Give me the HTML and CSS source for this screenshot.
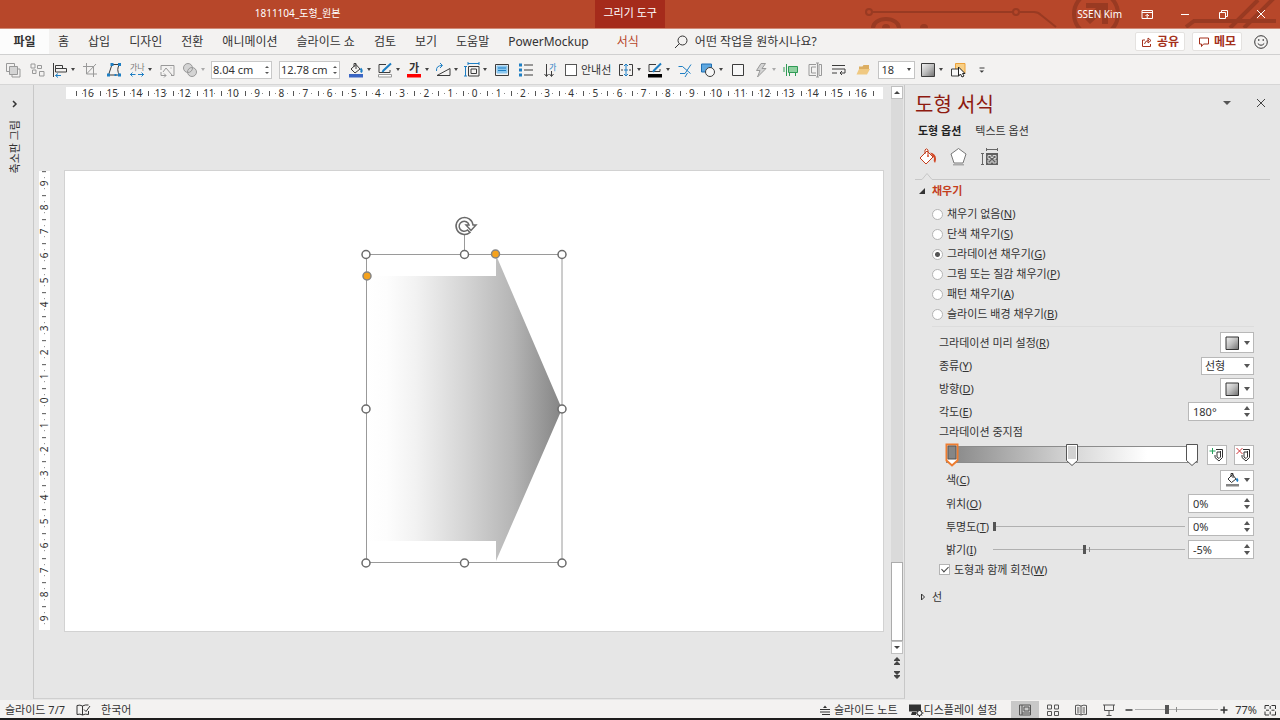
FILE: index.html
```html
<!DOCTYPE html>
<html lang="ko">
<head>
<meta charset="utf-8">
<meta name="viewport" content="width=device-width, initial-scale=1">
<title>1811104_도형_원본</title>
<link rel="stylesheet" href="styles.css">
</head>
<body>
<div class="app">

<header class="titlebar">
  <svg class="circuit" viewBox="0 0 430 28" aria-hidden="true">
    <circle cx="19" cy="12" r="3"/><path d="M22 12H163M170 12H184Q188 12 191 15L206 27"/><circle cx="166" cy="12" r="3"/>
    <path class="wide" d="M23 28A13 9 0 0 1 49 28"/><circle class="solid" cx="36" cy="28" r="4"/><circle class="solid" cx="74" cy="28" r="4"/>
    <circle class="wide" cx="246" cy="14" r="22"/><path class="solid" d="M236 3h22v21h-6v-11l-12 11-5-5 11-11h-10z"/>
    <path class="wide" d="M336 27l8-6h82M380 28l28-28M394 28l30-30"/>
  </svg>
  <div class="doc-title">1811104_도형_원본</div>
  <div class="context-title">그리기 도구</div>
  <div class="window-tools">
    <span class="user">SSEN Kim</span>
    <button class="win" aria-label="리본 표시 옵션"><svg class="ic" viewBox="0 0 16 16"><path d="M3 4.500h10.500v8H3zM3 6.500h10.500M8.200 12V8.500M6.500 10l1.700-1.700L10 10"/></svg></button>
    <button class="win" aria-label="최소화"><svg class="ic" viewBox="0 0 16 16"><path d="M4 8.500h8"/></svg></button>
    <button class="win" aria-label="이전 크기로 복원"><svg class="ic" viewBox="0 0 16 16"><path d="M4.500 6.500h6v6h-6zM6.500 6V4.500h6v6H11"/></svg></button>
    <button class="win" aria-label="닫기"><svg class="ic" viewBox="0 0 16 16"><path d="M4 4l8 8M12 4l-8 8"/></svg></button>
  </div>
</header>

<nav class="tabs">
  <button class="tab file">파일</button>
  <button class="tab">홈</button>
  <button class="tab">삽입</button>
  <button class="tab">디자인</button>
  <button class="tab">전환</button>
  <button class="tab">애니메이션</button>
  <button class="tab">슬라이드 쇼</button>
  <button class="tab">검토</button>
  <button class="tab">보기</button>
  <button class="tab">도움말</button>
  <button class="tab">PowerMockup</button>
  <button class="tab context">서식</button>
  <button class="tab tell"><svg class="ic" viewBox="0 0 16 16"><circle cx="9.500" cy="6.500" r="4.500"/><path d="M6.300 9.700L2 14"/></svg>어떤 작업을 원하시나요?</button>
  <div class="tab-actions">
    <button class="pill"><svg class="ic small" viewBox="0 0 12 12"><path d="M4 4H1.500v6.500h8V8M3.500 8Q4 4.500 8 4.500M7 2l3 2.500L7 7z"/></svg>공유</button>
    <button class="pill"><svg class="ic small" viewBox="0 0 12 12"><path d="M1.500 2h9v6H5.500L3.500 10.500V8h-2z"/></svg>메모</button>
    <button class="smile" aria-label="사용자 의견"><svg class="ic" viewBox="0 0 16 16"><circle cx="8" cy="8" r="6.300"/><path d="M4.800 9.500Q8 13 11.200 9.500M5.800 5v2M10.200 5v2"/></svg></button>
  </div>
</nav>

<div class="toolbar" role="toolbar" aria-label="빠른 실행 도구 모음">
  <button class="tb dim" aria-label="그룹"><svg class="ic" viewBox="0 0 16 16"><path d="M4 9.500H1.500v-8h8V4M12.500 7H15v8H7v-2.500"/><path class="fill-grey" d="M4.500 4.500h8v8h-8z"/></svg></button>
  <button class="tb dim" aria-label="그룹 해제"><svg class="ic" viewBox="0 0 16 16"><path d="M2 2h4v4H2zM8.500 3.500h4v3h-4zM3.500 8h3.500v3.500H3.500zM10.500 9.500h4.500v4.500h-4.500z"/></svg></button>
  <button class="tb dd" aria-label="맞춤"><svg class="ic" viewBox="0 0 16 16"><path d="M1.500 1v14M3.500 3.500h7v3h-7zM3.500 6.500h11v3.500h-11z"/><path class="blue" d="M9 13.500H3.500M6 11.500l-2.500 2 2.500 2"/></svg><i class="caret"></i></button>
  <button class="tb dim" aria-label="자르기"><svg class="ic" viewBox="0 0 16 16"><path d="M4.500 1v11H15M1 4.500h10.500V15M4.500 12L14 2"/></svg></button>
  <button class="tb" aria-label="점 편집"><svg class="ic" viewBox="0 0 16 16"><path d="M6 2.500h7.500q-3.500 5 0 10.500H2.500L6 2.500"/><path class="fill-blue" d="M4.500 1h3v3h-3zM12 1h3v3h-3zM1 11.500h3v3H1zM12 11.500h3v3h-3zM8.500 12h2v2h-2z"/></svg></button>
  <button class="tb dd" aria-label="문자 간격"><svg class="ic" viewBox="0 0 16 16"><text class="glyph dimtext" x="1" y="8" font-size="8">가나</text><path class="blue" d="M1 12.500h5.500M3.500 10.500l-2 2 2 2M9 12.500h6M12.500 10.500l2 2-2 2"/></svg><i class="caret"></i></button>
  <button class="tb dim" aria-label="그림 바꾸기"><svg class="ic" viewBox="0 0 16 16"><path d="M2 8V3.500h13v10h-3M4 10l3-4 6 7M11.500 6h1M2 10v3.500h5l-2-2M7 13.500l-2 2"/></svg></button>
  <button class="tb dd dim" aria-label="도형 병합"><svg class="ic" viewBox="0 0 16 16"><circle class="fill-grey" cx="6" cy="6" r="4.500"/><circle class="fill-grey" cx="10" cy="10" r="4.500"/><path d="M6 10.500A4.500 4.500 0 0 0 10.500 6"/></svg><i class="caret"></i></button>

  <div class="spin tool-spin first"><input type="text" value="8.04 cm" aria-label="도형 높이"><span class="arrows"><button aria-label="늘리기"></button><button aria-label="줄이기"></button></span></div>
  <div class="spin tool-spin"><input type="text" value="12.78 cm" aria-label="도형 너비"><span class="arrows"><button aria-label="늘리기"></button><button aria-label="줄이기"></button></span></div>

  <button class="tb dd lead" aria-label="도형 채우기"><svg class="ic" viewBox="0 0 16 16"><path d="M3 7l5-4.500 4 4.500-5 4zM6 5V1.500h2V7"/><path class="blue thick" d="M12.500 6.500q2 2 .5 4"/><path class="fill-royal" d="M1 12h14v3.500H1z"/></svg><i class="caret"></i></button>
  <button class="tb dd" aria-label="도형 윤곽선"><svg class="ic" viewBox="0 0 16 16"><path d="M9 2.500H2v8h11V8"/><path class="blue thick" d="M14 1.500L6.500 8.500 5.500 10"/><path class="fill-white" d="M1.500 12.500h13v2.500h-13z"/></svg><i class="caret"></i></button>
  <button class="tb dd" aria-label="글꼴 색"><svg class="ic" viewBox="0 0 16 16"><text class="glyph bold" x="3" y="10" font-size="11">가</text><path class="fill-red" d="M1 12h14v3.500H1z"/></svg><i class="caret"></i></button>
  <button class="tb dd" aria-label="회전"><svg class="ic" viewBox="0 0 16 16"><path d="M2 13.500h13V6.500z"/><path class="blue" d="M1.500 9Q1 3.500 7 3.500M5 1l2.500 2.500L5 6"/></svg><i class="caret"></i></button>
  <button class="tb dd" aria-label="크기"><svg class="ic" viewBox="0 0 16 16"><path d="M4.500 4.500H15v9.500H4.500zM7 7h5.500v4.500H7z"/><path class="blue" d="M4 1.500h11M4 0v3M15 0v3M1.500 4.500V14M0 4.500h3M0 14h3"/></svg><i class="caret"></i></button>
  <button class="tb" aria-label="텍스트 맞춤"><svg class="ic" viewBox="0 0 16 16"><path d="M1.500 2.500h13v11h-13z"/><path class="sky" d="M3 4h10v7H3z"/><path class="blue" d="M4 6h8M4 8.500h8"/></svg></button>
  <button class="tb" aria-label="글머리 기호"><svg class="ic" viewBox="0 0 16 16"><path d="M6 3h9M6 8h9M6 13h9"/><path class="fill-blue" d="M1 1.500h3v3H1zM1 6.500h3v3H1zM1 11.500h3v3H1z"/></svg></button>
  <button class="tb" aria-label="텍스트 방향"><svg class="ic" viewBox="0 0 16 16"><path d="M4.500 2v12M2.500 12l2 2.500 2-2.500M9.500 9v5M7.500 12l2 2.500 2-2.500"/><text class="glyph bluetext" x="7" y="8" font-size="8">가</text></svg></button>
  <label class="guide"><input type="checkbox">안내선</label>
  <button class="tb dd" aria-label="텍스트 줄 맞춤"><svg class="ic" viewBox="0 0 16 16"><path d="M5 2.500H1.500v11H5M11 2.500h3.500v11H11M3 8h2M11 8h2"/><path class="blue" d="M8 2v12M6 4l2-2 2 2M6 12l2 2 2-2M6 8h4"/></svg><i class="caret"></i></button>
  <button class="tb dd" aria-label="윤곽선 색"><svg class="ic" viewBox="0 0 16 16"><path d="M9 2.500H2v7h11V7"/><path class="blue thick" d="M14 1.500L7 8.500 6 10"/><path class="fill-black" d="M1 12h14v3.500H1z"/></svg><i class="caret"></i></button>
  <button class="tb" aria-label="연결선"><svg class="ic" viewBox="0 0 16 16"><path class="blue" d="M1.500 4.500h4l8 7M3 11.500h5l6-9M8 15l2.500-4"/></svg></button>
  <button class="tb dd" aria-label="도형"><svg class="ic" viewBox="0 0 16 16"><path class="skyblue" d="M1.500 2h10v8h-10z"/><circle class="fill-paper" cx="10" cy="10" r="4.500"/></svg><i class="caret"></i></button>
  <button class="tb" aria-label="사각형"><svg class="ic" viewBox="0 0 16 16"><path class="fill-paper" d="M2.500 2.500h11v11h-11z"/></svg></button>
  <button class="tb dd dim" aria-label="효과"><svg class="ic" viewBox="0 0 16 16"><path class="fill-grey" d="M8 1.500L3.500 8.500H7L4.500 15 13 6.500H9L12.500 1.500z"/></svg><i class="caret"></i></button>
  <button class="tb" aria-label="개체 맞춤"><svg class="ic" viewBox="0 0 16 16"><path class="green" d="M5.500 4.500h9v6h-9z"/><path class="green" d="M3.500 2v12M1 5v5M6.500 10v4M12.500 10v4"/></svg></button>
  <button class="tb dim" aria-label="대칭"><svg class="ic" viewBox="0 0 16 16"><path d="M9 2.500H2v11h7M4.500 5H9M4.500 5v6H9M12 2.500h2.500v11H12zM10.500 1v14M9 1h3M9 15h3"/></svg></button>
  <button class="tb" aria-label="줄 바꿈"><svg class="ic" viewBox="0 0 16 16"><path d="M1 3.500h13M1 7h13v4H9M1 11h5M11 9l-2 2 2 2"/></svg></button>
  <button class="tb" aria-label="열기"><svg class="ic" viewBox="0 0 16 16"><path class="folder-back" d="M4 9V4.500h3.500L8.500 3H14v6z"/><path class="folder" d="M4 7h11l-3 5.500H1.500z"/></svg></button>
  <div class="size-box"><input type="text" value="18" aria-label="글꼴 크기"><i class="caret"></i></div>
  <button class="tb dd" aria-label="그라데이션"><svg class="ic" viewBox="0 0 16 16"><path fill="url(#swatch)" d="M1.500 1.500h13v13h-13z"/></svg><i class="caret"></i></button>
  <button class="tb" aria-label="선택"><svg class="ic" viewBox="0 0 16 16"><path class="orange" d="M5.500 1.500H15V11H5.500z"/><path class="fill-paper" d="M1.500 7h7.500v7H1.500z"/><path class="cursor" d="M8.500 5v9l2-2 1.500 3 2-1-1.500-2.500H15z"/></svg></button>
  <button class="tb" aria-label="도구 모음 사용자 지정"><svg class="ic" viewBox="0 0 16 16"><path d="M5.500 6h5"/><path class="ink" d="M5.500 8.500h4.600L7.800 10.800z"/></svg></button>
</div>

<main class="workspace">
  <aside class="thumbs">
    <svg class="ic small" viewBox="0 0 12 12"><path class="medium" d="M4 3L7 6 4 9"/></svg>
    <span class="sideways">축소판 그림</span>
  </aside>

  <section class="editor">
    <div class="hruler"><span>16</span><span>15</span><span>14</span><span>13</span><span>12</span><span>11</span><span>10</span><span>9</span><span>8</span><span>7</span><span>6</span><span>5</span><span>4</span><span>3</span><span>2</span><span>1</span><span>0</span><span>1</span><span>2</span><span>3</span><span>4</span><span>5</span><span>6</span><span>7</span><span>8</span><span>9</span><span>10</span><span>11</span><span>12</span><span>13</span><span>14</span><span>15</span><span>16</span></div>
    <div class="stage">
      <div class="vruler"><span>9</span><span>8</span><span>7</span><span>6</span><span>5</span><span>4</span><span>3</span><span>2</span><span>1</span><span>0</span><span>1</span><span>2</span><span>3</span><span>4</span><span>5</span><span>6</span><span>7</span><span>8</span><span>9</span></div>
      <div class="slide">
        <svg viewBox="0 0 818 460" role="img" aria-label="화살표 도형">
          <defs>
            <linearGradient id="arrowFill" gradientUnits="userSpaceOnUse" x1="302" x2="497" y1="0" y2="0"><stop offset="0" stop-color="#fff"/><stop offset=".1" stop-color="#fdfdfd"/><stop offset=".25" stop-color="#f2f2f2"/><stop offset=".5" stop-color="#d5d5d5"/><stop offset=".75" stop-color="#b5b5b5"/><stop offset="1" stop-color="#848484"/></linearGradient>
            <linearGradient id="swatch" x1="0" y1="0" x2="1" y2="1"><stop offset="0" stop-color="#f4f4f4"/><stop offset=".5" stop-color="#bdbdbd"/><stop offset="1" stop-color="#6e6e6e"/></linearGradient>
          </defs>
          <path fill="url(#arrowFill)" d="M302 105H431V84L497 238 431 390V370H302z"/>
          <path class="frame" d="M301.500 83.500H497v308H301.500zM399.500 63v20"/>
          <g class="handle"><circle cx="301" cy="83.500" r="4"/><circle cx="399.500" cy="83.500" r="4"/><circle cx="497" cy="83.500" r="4"/><circle cx="301" cy="238" r="4"/><circle cx="497" cy="238" r="4"/><circle cx="301" cy="392" r="4"/><circle cx="399.500" cy="392" r="4"/><circle cx="497" cy="392" r="4"/></g>
          <g class="adjust"><circle cx="430.500" cy="83" r="4"/><circle cx="302" cy="105" r="4"/></g>
          <path class="rotate" d="M408 54A8.500 8.500 0 1 0 405 61.500L402.500 59A5 5 0 1 1 404 54H401L406 59.500 411 54z"/>
        </svg>
      </div>
    </div>
  </section>

  <div class="scroll">
    <button class="up" aria-label="위로"></button>
    <div class="track"><div class="thumb"></div></div>
    <button class="down" aria-label="아래로"></button>
    <button class="page" aria-label="이전 슬라이드"><svg class="ic small" viewBox="0 0 12 12"><path class="ink" d="M6 2l3 3H3zM6 6l3 3H3z"/><path d="M3 5.500h6M3 9.500h6"/></svg></button>
    <button class="page" aria-label="다음 슬라이드"><svg class="ic small" viewBox="0 0 12 12"><path class="ink" d="M6 6l3-3H3zM6 10l3-3H3z"/><path d="M3 2.500h6M3 6.500h6"/></svg></button>
  </div>

  <aside class="panel">
    <div class="panel-head"><h1>도형 서식</h1><button class="ghost" aria-label="작업창 옵션"><i class="caret big"></i></button><button class="ghost" aria-label="닫기"><svg class="ic small" viewBox="0 0 12 12"><path d="M2 2l8 8M10 2l-8 8"/></svg></button></div>
    <div class="panel-tabs"><button class="on">도형 옵션</button><button>텍스트 옵션</button></div>
    <div class="panel-icons">
      <button aria-label="채우기 및 선"><svg viewBox="0 0 20 20"><path class="pour" d="M2 11l7-7 6 6-7 7zM7 7V3q1-2.500 3 0v5"/><circle class="pour-dot" cx="10" cy="9" r="1"/><path class="pour-fill" d="M12 5.500q6 1 6 6.500 0 2-1 4-2-2-1-5z"/></svg></button>
      <button aria-label="효과"><svg viewBox="0 0 20 20"><path class="penta-shadow" d="M4 17h11v1.500H4z"/><path class="penta" d="M9.500 1.500l7.500 5.500-3 9h-9l-3-9z"/></svg></button>
      <button aria-label="크기 및 속성"><svg viewBox="0 0 20 20"><path class="metric" d="M6 2.500h12M6.500 1v3M17.500 1v3M2.500 6v12M1 6.500h3M1 17.500h3"/><path class="metric-fill" d="M6 6h12v12H6z"/><path class="metric-cross" d="M8 8.500h3v2h2v-2h3v3h-2v1.500h2v3h-3v-2h-2v2H8v-3h2v-1.500H8z"/></svg></button>
    </div>
    <svg class="notch" viewBox="0 0 20 8" aria-hidden="true"><path d="M0 7.500h7l5-6 5 6h3"/></svg>

    <h2 class="section open"><svg class="ic small" viewBox="0 0 12 12"><path class="ink" d="M9 3v6H3z"/></svg>채우기</h2>
    <fieldset class="radios" aria-label="채우기">
      <label><input type="radio" name="fill"><span>채우기 없음(<u>N</u>)</span></label>
      <label><input type="radio" name="fill"><span>단색 채우기(<u>S</u>)</span></label>
      <label><input type="radio" name="fill" checked><span>그라데이션 채우기(<u>G</u>)</span></label>
      <label><input type="radio" name="fill"><span>그림 또는 질감 채우기(<u>P</u>)</span></label>
      <label><input type="radio" name="fill"><span>패턴 채우기(<u>A</u>)</span></label>
      <label><input type="radio" name="fill"><span>슬라이드 배경 채우기(<u>B</u>)</span></label>
    </fieldset>

    <div class="props">
      <div class="row"><label for="preset">그라데이션 미리 설정(<u>R</u>)</label><button id="preset" class="drop"><svg class="ic" viewBox="0 0 16 16"><path fill="url(#swatch)" d="M2 2h12.500v12.500H2z"/></svg><i class="caret mid"></i></button></div>
      <div class="row"><label for="kind">종류(<u>Y</u>)</label><span class="select"><select id="kind"><option>선형</option></select><i class="caret mid"></i></span></div>
      <div class="row"><label for="dir">방향(<u>D</u>)</label><button id="dir" class="drop"><svg class="ic" viewBox="0 0 16 16"><path fill="url(#swatch)" d="M2 2h12.500v12.500H2z"/></svg><i class="caret mid"></i></button></div>
      <div class="row"><label for="angle">각도(<u>E</u>)</label><span class="spin"><input id="angle" type="text" value="180°"><span class="arrows"><button aria-label="늘리기"></button><button aria-label="줄이기"></button></span></span></div>
      <div class="row caption">그라데이션 중지점</div>
      <div class="row stops">
        <div class="ramp">
          <button class="stop selected" style="left:2%" aria-label="중지점 1"><svg viewBox="0 0 14 24"><path class="tag" d="M1.500 1.500h11v16L7 22.500 1.500 17.500z"/><path class="tone dark" d="M3 3h8v13H3z"/></svg></button>
          <button class="stop" style="left:50%" aria-label="중지점 2"><svg viewBox="0 0 14 24"><path class="tag" d="M1.500 1.500h11v16L7 22.500 1.500 17.500z"/><path class="tone" d="M3 3h8v13H3z"/></svg></button>
          <button class="stop" style="left:98%" aria-label="중지점 3"><svg viewBox="0 0 14 24"><path class="tag" d="M1.500 1.500h11v16L7 22.500 1.500 17.500z"/></svg></button>
        </div>
        <button class="square" aria-label="중지점 추가"><svg class="ic" viewBox="0 0 16 16"><path d="M7 2.500h6.500v8L10 14l-4-3.500V8M11.500 4v6L10 11.500 8 10V5h3.500"/><path class="plus" d="M3.500 1v6M.5 4h6"/></svg></button>
        <button class="square" aria-label="중지점 제거"><svg class="ic" viewBox="0 0 16 16"><path d="M7 2.500h6.500v8L10 14l-4-3.500V8M11.500 4v6L10 11.500 8 10V5h3.500"/><path class="cross" d="M.5 1l6 6M6.500 1l-6 6"/></svg></button>
      </div>
      <div class="row sub tall"><label for="color">색(<u>C</u>)</label><button id="color" class="drop"><svg class="ic" viewBox="0 0 16 16"><path d="M4 7l4.500-4.500L12 7l-4.500 3.500zM7 5V1.500h2V6"/><path class="blue thick" d="M12.500 6.500q1.500 1.500.5 3"/><path class="fill-mid" d="M2 12h13v2.500H2z"/></svg><i class="caret mid"></i></button></div>
      <div class="row sub"><label for="pos">위치(<u>O</u>)</label><span class="spin"><input id="pos" type="text" value="0%"><span class="arrows"><button aria-label="늘리기"></button><button aria-label="줄이기"></button></span></span></div>
      <div class="row sub"><label for="alpha">투명도(<u>T</u>)</label><input class="range" type="range" min="0" max="100" value="0" aria-label="투명도"><span class="spin"><input id="alpha" type="text" value="0%"><span class="arrows"><button aria-label="늘리기"></button><button aria-label="줄이기"></button></span></span></div>
      <div class="row sub"><label for="bright">밝기(<u>I</u>)</label><input class="range centred" type="range" min="-100" max="100" value="-5" aria-label="밝기"><span class="spin"><input id="bright" type="text" value="-5%"><span class="arrows"><button aria-label="늘리기"></button><button aria-label="줄이기"></button></span></span></div>
      <label class="check"><input type="checkbox" checked><span>도형과 함께 회전(<u>W</u>)</span></label>
    </div>
    <h2 class="section closed"><svg class="ic small" viewBox="0 0 12 12"><path d="M4.500 3L7.500 6l-3 3z"/></svg>선</h2>
  </aside>
</main>

<footer class="status">
  <span>슬라이드 7/7</span>
  <button class="plain proof" aria-label="맞춤법 검사"><svg class="ic" viewBox="0 0 16 16"><path d="M7.500 4Q5 2.500 2 3.500v9q3-1 5.500.5V4Q10 2.500 13.500 3M7.500 13q2.500-1.500 6-.5V9M9 7.500l2 2L15 4"/></svg></button>
  <span>한국어</span>
  <span class="grow"></span>
  <button class="plain notes"><svg class="ic small" viewBox="0 0 12 12"><path class="ink" d="M6 1.500l2 2.500H4z"/><path d="M1 5.500h10M1 8h10M3 10.500h8"/></svg>슬라이드 노트</button>
  <button class="plain display"><svg class="ic" viewBox="0 0 16 16"><path class="ink" d="M1 2.500h12v7H1zM4 10h4v3H3z"/><circle class="fill-paper" cx="11.500" cy="11" r="2.500"/><path d="M11.500 7.500v1.500M11.500 13v2M8 11h1M14 11h1.500M9 8.500l1 1M14 8.500l-1 1M9 13.500l1-1M14 13.500l-1-1"/></svg>디스플레이 설정</button>
  <button class="view on" aria-label="기본"><svg class="ic" viewBox="0 0 16 16"><path d="M2.500 3h11v10h-11zM5 3v10M7 5h5v4H7zM5 11h8"/></svg></button>
  <button class="view" aria-label="여러 슬라이드"><svg class="ic" viewBox="0 0 16 16"><path d="M2.500 3h4v4h-4zM9.500 3h4v4h-4zM2.500 9.500h4v4h-4zM9.500 9.500h4v4h-4z"/></svg></button>
  <button class="view" aria-label="읽기용 보기"><svg class="ic" viewBox="0 0 16 16"><path d="M8 4Q5 2.500 2.500 3.500v9Q5 11.500 8 13q3-1.500 5.500-.5v-9Q11 2.500 8 4v9M4 6h2.500M4 8h2.500M4 10h2.500M9.500 6H12M9.500 8H12M9.500 10H12"/></svg></button>
  <button class="view" aria-label="슬라이드 쇼"><svg class="ic" viewBox="0 0 16 16"><path d="M2 3h12M3.500 3v5.500h9V3M8 8.500V13M5.500 13.500h5"/></svg></button>
  <button class="plain zoom-step" aria-label="축소"><svg class="ic small" viewBox="0 0 12 12"><path class="medium" d="M2.500 6h7"/></svg></button>
  <input class="range zoom" type="range" min="10" max="190" value="77" aria-label="확대/축소">
  <button class="plain zoom-step" aria-label="확대"><svg class="ic small" viewBox="0 0 12 12"><path class="medium" d="M2.500 6h7M6 2.500v7"/></svg></button>
  <span class="percent">77%</span>
  <button class="plain" aria-label="창에 맞춤"><svg class="ic" viewBox="0 0 16 16"><path d="M3 7V3.500h4M9.500 3.500h4V7M3 9.500V13h4M13.500 9.500V13h-4M8.200 4v3M8.200 9.500v3M4 8.200h3M9.500 8.200h3"/></svg></button>
</footer>
</div>
</body>
</html>
```

FILE: styles.css
```css
* { box-sizing: border-box; }
body {
  margin: 0;
  font: 11px/16px "Noto Sans", "Noto Sans CJK KR", sans-serif;
  color: #333;
  background: #e6e6e6;
}
button, input, select { font: inherit; color: inherit; margin: 0; }
button { border: 0; padding: 0; background: none; }
.app { display: flex; flex-direction: column; height: 100vh; border-bottom: 2px solid #1c1c1c; }

/* icons */
.ic { width: 16px; height: 16px; flex: none; fill: none; stroke: currentColor; stroke-width: 1; overflow: visible; }
.ic.small { width: 12px; height: 12px; }
.ic text { stroke: none; fill: #333; }
.ic .bold { font-weight: 700; }
.ic .dimtext { fill: #777; }
.ic .bluetext { fill: #1e7fc4; }
.blue { stroke: #1e7fc4; }
.thick { stroke-width: 2; }
.medium { stroke-width: 1.5; }
.ink { fill: currentColor; stroke: none; }
.fill-grey { fill: #d4d4d4; }
.fill-blue { fill: #1e7fc4; stroke: none; }
.fill-royal { fill: #3a66c4; stroke: none; }
.fill-red { fill: #f00; stroke: none; }
.fill-black { fill: #000; stroke: none; }
.fill-mid { fill: #858585; stroke: none; }
.fill-white { fill: #fff; stroke: #999; }
.fill-paper { fill: #f7f7f7; }
.sky { fill: #8cc8f0; stroke: #8cc8f0; }
.skyblue { fill: #5fa8e0; stroke: #1e6fb4; }
.green { fill: #8fd0a0; stroke: #2f9a55; }
.folder { fill: #f0c982; stroke: none; }
.folder-back { fill: #dcae62; stroke: none; }
.orange { fill: #f8cf85; stroke: #eca23a; }
.cursor { fill: #fff; stroke: #222; }
.plus { stroke: #23a05a; }
.cross { stroke: #d13438; }
.caret { flex: none; border: 2px solid transparent; border-top: 3px solid #444; border-bottom: 0; }
.caret.mid { border-width: 4px 3px 0; border-top-color: #555; }
.caret.big { border-width: 4px 4px 0; border-top-color: #555; }

/* title bar */
.titlebar { position: relative; flex: none; display: flex; height: 29px; background: #b7472a; border-bottom: 1px solid #d08a76; color: #fff; overflow: hidden; }
.circuit { position: absolute; right: 0; top: 0; width: 430px; height: 28px; fill: none; stroke: #993a22; stroke-width: 2; }
.circuit .wide { stroke-width: 4; }
.circuit .solid { fill: #993a22; stroke: none; }
.doc-title { flex: 0 0 46.5%; text-align: center; font-size: 10px; line-height: 26px; }
.context-title { flex: none; width: 70px; text-align: center; line-height: 26px; background: #a52b1b; }
.window-tools { position: relative; flex: 1; display: flex; align-items: center; justify-content: flex-end; }
.user { margin-right: 6px; font-size: 10px; }
.win { display: flex; align-items: center; justify-content: center; width: 38px; height: 28px; }

/* ribbon tabs */
.tabs { flex: none; display: flex; height: 26px; background: #f3f2f1; border-bottom: 1px solid #d0d0d0; font-size: 12px; }
.tab { padding: 0 9px; white-space: nowrap; line-height: 25px; }
.tab + .tab { margin-left: 1px; }
.tab.file { width: 49px; background: #fcfcfc; font-weight: 700; }
.tab.file + .tab { margin-left: 0; }
.tab.context { padding: 0 24px 0 18px; color: #b7472a; }
.tab.tell { display: flex; align-items: center; gap: 6px; }
.tab-actions { flex: 1; display: flex; justify-content: flex-end; align-items: center; gap: 7px; padding-right: 11px; }
.pill { display: flex; align-items: center; justify-content: center; gap: 4px; width: 50px; height: 19px; background: #fff; border: 1px solid #e4e2e0; border-radius: 2px; color: #a4301c; font-weight: 700; }
.smile { display: flex; margin-left: 4px; }

/* quick tools */
.toolbar { flex: none; display: flex; align-items: center; height: 30px; padding-left: 1px; background: #f3f2f1; border-bottom: 1px solid #d6d6d6; }
.tb { flex: none; display: flex; align-items: center; justify-content: center; width: 24px; height: 24px; color: #3c3c3c; }
.tb.dd { justify-content: flex-start; gap: 3px; width: 29px; padding-left: 3px; }
.tb.dim { color: #999; }
.tb.dim .caret { border-top-color: #aaa; }
.guide { display: flex; align-items: center; gap: 4px; margin: 0 4px 0 3px; white-space: nowrap; }
.guide input { appearance: none; width: 12px; height: 12px; background: #fff; border: 1px solid #555; }
.size-box { display: flex; align-items: center; width: 37px; height: 18px; margin: 0 2px 0 3px; padding-right: 3px; background: #fff; border: 1px solid #c4c4c4; }
.size-box input { flex: 1; min-width: 0; border: 0; padding: 0 2px; background: none; }

/* number boxes */
.spin { flex: none; display: flex; width: 66px; height: 19px; background: #fff; border: 1px solid #b8b8b8; }
.spin input { flex: 1; min-width: 0; padding: 0 0 0 4px; border: 0; background: none; }
.arrows { display: flex; flex-direction: column; align-items: center; justify-content: space-evenly; width: 12px; }
.arrows button { width: 0; height: 0; border: 3px solid transparent; }
.arrows button:first-child { border-width: 0 3px 4px; border-bottom-color: #555; }
.arrows button:last-child { border-width: 4px 3px 0; border-top-color: #555; }
.tool-spin { width: 61px; height: 18px; margin-right: 7px; border-color: #c8c8c8; }
.tool-spin input { padding-left: 1px; }
.tool-spin .arrows { width: 9px; }
.tool-spin .arrows button { border-left-width: 2px; border-right-width: 2px; }
.tool-spin .arrows button:first-child { border-bottom-width: 2px; }
.tool-spin .arrows button:last-child { border-top-width: 2px; }
.tool-spin.first { margin-left: 3px; }
.tool-spin + .lead { margin-left: -2px; }

/* workspace */
.workspace { flex: 1; display: flex; min-height: 0; }
.thumbs { flex: none; display: flex; flex-direction: column; align-items: center; gap: 10px; width: 34px; padding: 13px 3px 0 0; border-right: 1px solid #c8c8c8; }
.sideways { writing-mode: vertical-rl; text-orientation: sideways; transform: rotate(180deg); }
.editor { flex: 1; min-width: 0; display: flex; flex-direction: column; padding: 2px 8px 0 5px; border-bottom: 1px solid #cfcfcf; }
.hruler { flex: none; display: flex; height: 12px; margin-left: 27px; padding: 0 10px; background: #fff; font-size: 10px; line-height: 12px; }
.hruler span {
  flex: 1; min-width: 0; text-align: center;
  background:
    linear-gradient(#555, #555) 0 50% / 1px 5px no-repeat,
    linear-gradient(#888, #888) 25% 50% / 1px 1px no-repeat,
    linear-gradient(#888, #888) 75% 50% / 1px 1px no-repeat;
}
.hruler::after { content: ""; align-self: center; width: 1px; height: 5px; margin-right: -1px; background: #555; }
.stage { flex: 1; display: flex; align-items: center; min-height: 0; padding-top: 4px; }
.vruler { align-self: center; flex: none; display: flex; flex-direction: column; width: 11px; height: 459px; margin-right: 15px; background: #fff; font-size: 10px; line-height: 11px; }
.vruler span {
  flex: 1; writing-mode: vertical-rl; transform: rotate(180deg); text-align: center;
  background:
    linear-gradient(#555, #555) 50% 100% / 4px 1px no-repeat,
    linear-gradient(#888, #888) 50% 25% / 1px 1px no-repeat,
    linear-gradient(#888, #888) 50% 75% / 1px 1px no-repeat;
}
.slide { flex: 1; min-width: 0; background: #fff; outline: 1px solid #d2d2d2; }
.slide svg { display: block; width: 100%; }
.frame { fill: none; stroke: #9a9a9a; }
.handle { fill: #fff; stroke: #6a6a6a; stroke-width: 1.5; }
.adjust { fill: #f5a21d; stroke: #858585; stroke-width: 1.5; }
.rotate { fill: #fff; stroke: #6a6a6a; stroke-width: 1.5; }

/* scrollbar */
.scroll { flex: none; display: flex; flex-direction: column; width: 14px; padding: 1px 1px 16px 0; border-right: 1px solid #c8c8c8; border-bottom: 1px solid #cfcfcf; }
.scroll .up, .scroll .down { display: flex; align-items: center; justify-content: center; height: 13px; background: #fff; border: 1px solid #c0c0c0; }
.scroll .up::after { content: ""; border: 3px solid transparent; border-top: 0; border-bottom-color: #444; }
.scroll .down::after { content: ""; border: 3px solid transparent; border-bottom: 0; border-top-color: #444; }
.track { flex: 1; display: flex; flex-direction: column; justify-content: flex-end; background: #dadada; }
.thumb { height: 14.5%; background: #fff; border: 1px solid #ababab; }
.page { display: flex; justify-content: center; align-items: center; height: 14px; color: #444; }

/* format panel */
.panel { flex: 0 0 375px; padding: 5px 10px 0; overflow: hidden; }
.panel-head { display: flex; align-items: center; height: 29px; }
.panel-head h1 { flex: 1; margin: 0; font-size: 20px; line-height: 28px; font-weight: 400; color: #8e1a10; }
.ghost { display: flex; align-items: center; justify-content: center; width: 18px; height: 18px; margin-bottom: 4px; color: #444; }
.ghost + .ghost { margin-left: 16px; }
.panel-tabs { display: flex; gap: 14px; padding: 4px 3px; }
.panel-tabs .on { font-weight: 700; color: #222; }
.panel-icons { display: flex; gap: 11px; padding: 4px 3px 0; }
.panel-icons button { width: 20px; height: 20px; }
.panel-icons svg { display: block; width: 20px; height: 20px; fill: none; }
.pour { fill: #fff; stroke: #c43e1c; }
.pour-dot, .pour-fill { fill: #d24726; }
.penta { fill: #fff; stroke: #777; }
.penta-shadow { fill: #aaa; }
.metric { stroke: #666; }
.metric-fill { fill: #606060; }
.metric-cross { stroke: #d6d6d6; }
.notch { display: block; width: 20px; height: 8px; margin-top: 5px; fill: none; stroke: #c8c8c8; overflow: visible; }
.section { display: flex; align-items: center; gap: 4px; margin: 0; padding-left: 1px; font-size: 11px; line-height: 16px; color: #333; font-weight: 700; }
.section.open { position: relative; padding-top: 3px; color: #c43e1c; }
.section.open::before { content: ""; position: absolute; top: -1px; left: 20px; right: 0; height: 1px; background: #c8c8c8; }
.section.open svg { color: #333; }
.section.closed { padding: 11px 0 0 2px; gap: 3px; font-weight: 400; }
.radios { margin: 5px 16px 0 17px; padding: 0 0 2px 0; border: 0; border-bottom: 1px solid #dcdcdc; }
.radios label { display: flex; align-items: center; height: 20px; gap: 4px; }
.radios input { appearance: none; width: 11px; height: 11px; background: #fff; border: 1px solid #b4b4b4; border-radius: 50%; }
.radios input:checked { background: radial-gradient(circle, #555 0 2px, #fff 3px); }
.props { padding: 4px 16px 0 24px; }
.row { display: flex; align-items: center; height: 23px; }
.row > label { flex: 1; white-space: nowrap; }
.row.tall { height: 24px; }
.row.sub { padding-left: 7px; }
.row.caption { height: 18px; }
.row.stops { height: 27px; gap: 7px; padding-left: 7px; }
.drop { display: flex; align-items: center; justify-content: flex-end; gap: 4px; width: 34px; height: 21px; padding-right: 3px; background: #fff; border: 1px solid #b8b8b8; }
.select { position: relative; display: flex; width: 53px; }
.select select { width: 100%; height: 18px; padding: 0 3px; appearance: none; background: #fff; border: 1px solid #b8b8b8; border-radius: 0; line-height: 16px; }
.select .caret { position: absolute; right: 4px; top: 7px; pointer-events: none; }
.ramp { position: relative; flex: 1; height: 17px; margin-right: 2px; border: 1px solid #8c8c8c; background: linear-gradient(90deg, #868686, #d6d6d6 50%, #fff 80%); }
.stop { position: absolute; top: -4px; width: 14px; height: 24px; margin-left: -7px; }
.stop svg { display: block; width: 14px; height: 24px; }
.tag { fill: #fff; stroke: #555; }
.selected .tag { stroke: #ed7d31; stroke-width: 2; }
.tone { fill: #d2d2d2; }
.tone.dark { fill: #868686; stroke: #555; }
.square { display: flex; align-items: center; justify-content: center; width: 20px; height: 20px; background: #fff; border: 1px solid #b8b8b8; }
.range { appearance: none; flex: none; width: 192px; height: 13px; margin-right: 3px; background: linear-gradient(#b0b0b0, #b0b0b0) 50% 50% / 100% 1px no-repeat; }
.range.centred { background: linear-gradient(#888, #888) 50% 50% / 1px 5px no-repeat, linear-gradient(#b0b0b0, #b0b0b0) 50% 50% / 100% 1px no-repeat; }
.range::-webkit-slider-thumb { appearance: none; width: 3px; height: 9px; background: #555; border: 0; }
.check { display: flex; align-items: center; gap: 4px; height: 17px; }
.check input { appearance: none; display: grid; place-items: center; width: 11px; height: 11px; background: #fff; border: 1px solid #b4b4b4; }
.check input::after { content: ""; width: 3px; height: 6px; margin-bottom: 2px; border: solid #444; border-width: 0 1px 1px 0; transform: rotate(45deg); }

/* status bar */
.status { flex: none; display: flex; align-items: center; height: 18px; margin-top: 1px; padding: 1px 2px 0 5px; background: #f3f2f1; white-space: nowrap; }
.grow { flex: 1; }
.plain { display: flex; align-items: center; gap: 3px; }
.proof { margin: 0 10px; }
.display { margin: 0 14px 0 10px; gap: 0; }
.view { display: flex; align-items: center; justify-content: center; width: 28px; height: 17px; color: #555; }
.view.on { background: #c8c8c8; }
.range.zoom { width: 83px; margin: 0; background: linear-gradient(#888, #888) 50% 50% / 1px 5px no-repeat, linear-gradient(#b0b0b0, #b0b0b0) 50% 50% / 100% 1px no-repeat; }
.zoom::-webkit-slider-thumb { width: 4px; }
.percent { margin: 0 5px; }
```
